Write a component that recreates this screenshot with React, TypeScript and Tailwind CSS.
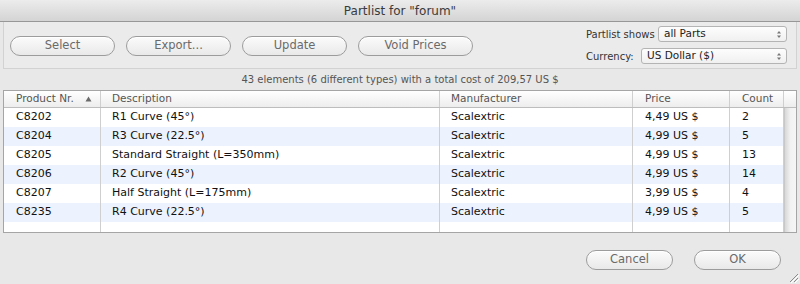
import React from "react";

const rows = [
  ["C8202", "R1 Curve (45°)", "Scalextric", "4,49 US $", "2"],
  ["C8204", "R3 Curve (22.5°)", "Scalextric", "4,99 US $", "5"],
  ["C8205", "Standard Straight (L=350mm)", "Scalextric", "4,99 US $", "13"],
  ["C8206", "R2 Curve (45°)", "Scalextric", "4,99 US $", "14"],
  ["C8207", "Half Straight (L=175mm)", "Scalextric", "3,99 US $", "4"],
  ["C8235", "R4 Curve (22.5°)", "Scalextric", "4,99 US $", "5"],
];

function Pill({ label, w }: { label: string; w: string }) {
  return (
    <div
      className={`${w} h-[20px] shrink-0 rounded-full border border-[#9c9c9c] bg-gradient-to-b from-[#fbfbfb] to-[#e9e9e9] flex items-center justify-center text-[11.5px] text-[#6a6a6a] shadow-[inset_0_1px_0_#fff]`}
    >
      {label}
    </div>
  );
}

function Popup({ label, w }: { label: string; w: string }) {
  return (
    <div
      className={`${w} h-[16px] shrink-0 rounded-[3px] border border-[#b4b4b4] bg-gradient-to-b from-[#fdfdfd] to-[#f0f0f0] flex items-center justify-between pl-[5px] pr-[4px] text-[10.5px] text-[#222]`}
    >
      <span className="whitespace-nowrap">{label}</span>
      <svg width="6" height="9" viewBox="0 0 6 9">
        <path d="M1 3.5 L3 1 L5 3.5 Z" fill="#777" />
        <path d="M1 5.5 L3 8 L5 5.5 Z" fill="#777" />
      </svg>
    </div>
  );
}

const colW = ["w-[97px]", "w-[339px]", "w-[193px]", "w-[97px]", "w-[54px]"];
const colPad = ["pl-[12px]", "pl-[11px]", "pl-[11px]", "pl-[12px]", "pl-[12px]"];

export default function App() {
  return (
    <div
      className="w-[800px] h-[284px] bg-[#e8e8e8] flex flex-col overflow-hidden"
      style={{ fontFamily: '"DejaVu Sans", "Liberation Sans", sans-serif' }}
    >
      {/* Title bar */}
      <div className="h-[22px] shrink-0 bg-gradient-to-b from-[#ececec] to-[#d4d4d4] border-b border-[#979797] flex items-center justify-center text-[12px] text-[#3a3a3a]">
        Partlist for "forum"
      </div>

      {/* Toolbar box */}
      <div className="mx-[3px] h-[47px] shrink-0 border-x border-b border-[#d2d2d2] bg-[#ebebeb] flex items-center justify-between pl-[6px] pr-[9px]">
        <div className="flex items-center gap-[11px] pt-[2px]">
          <Pill label="Select" w="w-[105px]" />
          <Pill label="Export..." w="w-[105px]" />
          <Pill label="Update" w="w-[105px]" />
          <Pill label="Void Prices" w="w-[115px]" />
        </div>
        <div className="w-[201px] shrink-0 flex flex-col gap-[6px] text-[10px] text-[#333] whitespace-nowrap">
          <div className="flex items-center justify-between">
            <span>Partlist shows</span>
            <Popup label="all Parts" w="w-[129px]" />
          </div>
          <div className="flex items-center justify-between">
            <span>Currency:</span>
            <Popup label="US Dollar ($)" w="w-[146px]" />
          </div>
        </div>
      </div>

      {/* Status */}
      <div className="h-[21px] shrink-0 flex items-center justify-center text-[10px] text-[#555]">
        43 elements (6 different types) with a total cost of 209,57 US $
      </div>

      {/* Table */}
      <div className="mx-[3px] w-[794px] h-[143px] shrink-0 border border-[#a5a5a5] bg-white flex flex-col">
        <div className="h-[17px] shrink-0 flex bg-gradient-to-b from-[#ffffff] to-[#ededed] border-b border-[#bdbdbd] text-[10.5px] text-[#555]">
          {["Product Nr.", "Description", "Manufacturer", "Price", "Count"].map((h, i) => (
            <div
              key={h}
              className={`${colW[i]} ${colPad[i]} h-full flex items-center justify-between border-r border-[#cfcfcf] pr-[8px]`}
            >
              <span>{h}</span>
              {i === 0 && (
                <svg width="7" height="6" viewBox="0 0 7 6">
                  <path d="M0.5 5.5 L3.5 0.5 L6.5 5.5 Z" fill="#6a6a6a" />
                </svg>
              )}
            </div>
          ))}
          <div className="flex-1" />
        </div>
        <div className="flex-1 flex min-h-0">
          <div className="w-[780px] flex flex-col">
            {rows.map((r, ri) => (
              <div
                key={ri}
                className={`h-[19px] shrink-0 flex text-[11px] text-[#111] ${ri % 2 === 1 ? "bg-[#edf3fe]" : "bg-white"}`}
              >
                {r.map((c, ci) => (
                  <div
                    key={ci}
                    className={`${colW[ci]} ${colPad[ci]} h-full flex items-center border-r border-[#cfcfcf]`}
                  >
                    {c}
                  </div>
                ))}
              </div>
            ))}
            <div className="flex-1 flex">
              {colW.map((w, i) => (
                <div key={i} className={`${w} h-full border-r border-[#cfcfcf]`} />
              ))}
            </div>
          </div>
          <div className="flex-1 bg-gradient-to-r from-[#d8d8d8] via-[#f2f2f2] to-[#f6f6f6] border-l border-[#c8c8c8]" />
        </div>
      </div>

      {/* Footer */}
      <div className="flex-1 relative flex items-start justify-end pr-[19px] pt-[17px] gap-[21px]">
        <Pill label="Cancel" w="w-[87px]" />
        <Pill label="OK" w="w-[87px]" />
        <svg className="absolute right-[1px] bottom-[1px]" width="12" height="12" viewBox="0 0 12 12">
          <path d="M11 3 L3 11 M11 7 L7 11" stroke="#8a8a8a" strokeWidth="1" />
          <path d="M12 4 L4 12 M12 8 L8 12" stroke="#fff" strokeWidth="1" />
        </svg>
      </div>
    </div>
  );
}
